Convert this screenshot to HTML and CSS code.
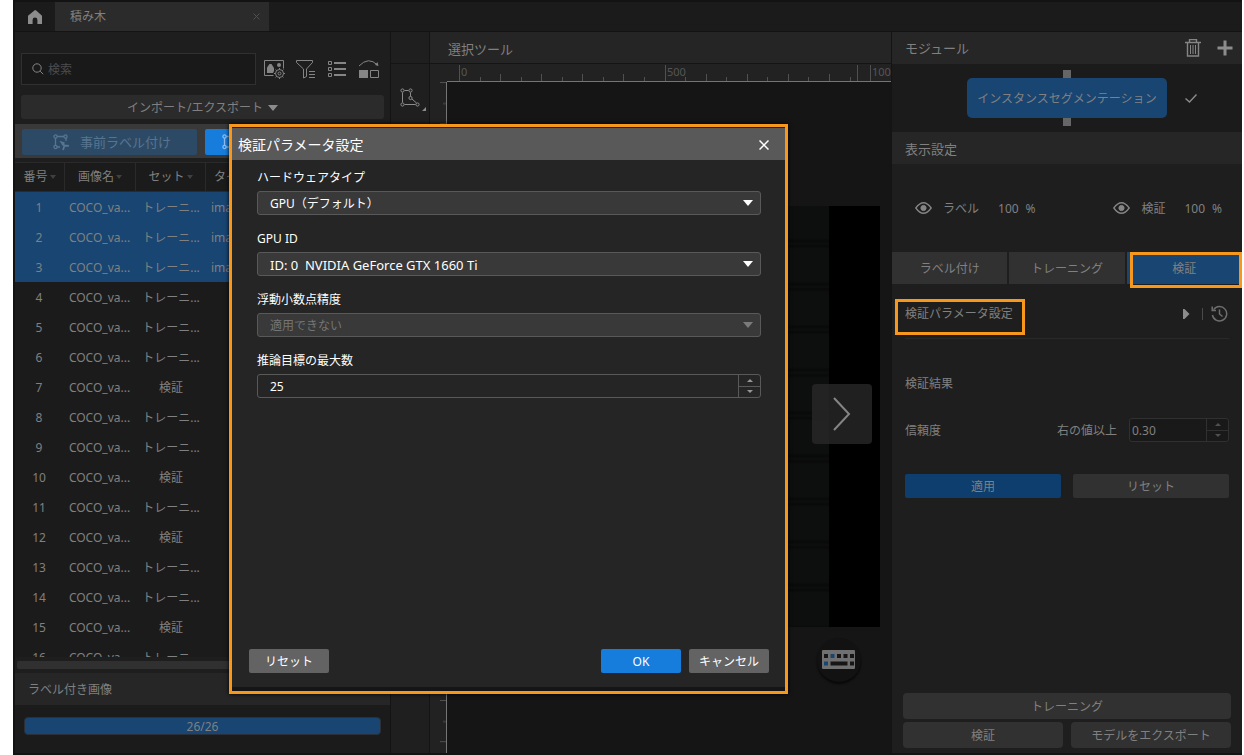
FILE: index.html
```html
<!DOCTYPE html>
<html lang="ja">
<head>
<meta charset="utf-8">
<title>検証パラメータ設定</title>
<link rel="stylesheet" href="styles.css">
</head>
<body>
<div class="app">
  <header class="titlebar">
    <button class="home" aria-label="ホーム">
      <svg width="16" height="16" viewBox="0 0 16 16"><path fill="#8c8c8c" d="M8 1L1 6.800V15h4.600v-4a2.400 2.400 0 0 1 4.800 0v4H15V6.800L9.200 1.600Q8 .6 6.800 1.600z"/></svg>
    </button>
    <div class="doc-tab"><span>積み木</span>
      <button class="tab-close" aria-label="閉じる"><svg width="7" height="7" viewBox="0 0 7 7"><path d="M.5 .5l6 6M6.500 .5l-6 6" stroke="#505050"/></svg></button>
    </div>
  </header>

  <div class="workspace">
    <section class="data-panel">
      <div class="search-row">
        <label class="search">
          <svg width="12" height="12" viewBox="0 0 12 12" fill="none" stroke="#858585"><circle cx="5" cy="5" r="4.200"/><path d="M8.200 8.200l3 3"/></svg>
          <input type="text" placeholder="検索" aria-label="検索">
        </label>
        <button class="icon-btn" aria-label="画像設定">
          <svg width="21" height="20" viewBox="0 0 21 20" fill="none" stroke="#858585"><path d="M9.500 16.500h-9v-15h19v8"/><path fill="#858585" stroke="none" d="M3 14V8.500L5.500 5h2L10 9v3l-1 2z"/><circle cx="15" cy="6" r="2" fill="#858585" stroke="none"/><circle cx="15.500" cy="14.500" r="4"/><circle cx="15.500" cy="14.500" r="1.500"/><path d="M15.500 9v1.500M15.500 18.500V20M10 14.500h1.500M19.500 14.500H21M11.600 10.600l1 1M18.400 17.400l1 1M11.600 18.400l1-1M18.400 11.600l1-1"/></svg>
        </button>
        <button class="icon-btn" aria-label="フィルター">
          <svg width="20" height="20" viewBox="0 0 20 20" fill="none" stroke="#858585"><path d="M.5 1.500h16v2L10.500 10v7.500l-3 1.500v-9L.5 3.500z"/><path d="M13 12.500h6M13 15.500h6M13 18.500h6"/></svg>
        </button>
        <button class="icon-btn" aria-label="リスト表示">
          <svg width="20" height="20" viewBox="0 0 20 20" fill="none" stroke="#858585"><path d="M1.500 2.500h3v3h-3zM1.500 8.500h3v3h-3zM1.500 14.500h3v3h-3z"/><path stroke-width="2" d="M7 4h12M7 10h12M7 16h12"/></svg>
        </button>
        <button class="icon-btn" aria-label="切り替え">
          <svg width="22" height="20" viewBox="0 0 22 20" fill="none" stroke="#858585"><path d="M1 7Q10.500-3 19.500 6"/><path fill="#858585" stroke="none" d="M1 11h9v8H1zM20.500 7l-1-4-2.500 3z"/><path d="M12.500 11.500h8v7h-8z"/></svg>
        </button>
      </div>
      <button class="io-btn">インポート/エクスポート
        <svg width="10" height="6" viewBox="0 0 10 6"><path fill="#8c8c8c" d="M0 0h10L5 6z"/></svg>
      </button>
      <div class="label-strip">
        <button class="label-btn pre">
          <svg width="17" height="17" viewBox="0 0 17 17" fill="none" stroke="#58758f" stroke-width="1.300"><path d="M4 2.500h7M2.500 4v7M13 4v3M4 13h3"/><circle cx="2.500" cy="2.500" r="1.600"/><circle cx="12.500" cy="2.500" r="1.600"/><circle cx="2.500" cy="13" r="1.600"/><path fill="#58758f" d="M8 8l3 .8-1 2z"/><path stroke-width="1.800" d="M9 9.500l2.500 2 4.500.3M11.500 11.500L10 16"/></svg>
          <span>事前ラベル付け</span>
        </button>
        <button class="label-btn main" aria-label="ラベル付け">
          <svg width="17" height="17" viewBox="0 0 17 17" fill="none" stroke="#8dbcec" stroke-width="1.300"><path d="M4 2.500h7M2.500 4v7M13 4v7M4 13h7"/><circle cx="2.500" cy="2.500" r="1.600"/><circle cx="12.500" cy="2.500" r="1.600"/><circle cx="2.500" cy="13" r="1.600"/><circle cx="12.500" cy="13" r="1.600"/></svg>
        </button>
      </div>
      <div class="table-wrap">
        <table class="images">
          <colgroup><col class="c-num"><col class="c-name"><col class="c-set"><col></colgroup>
          <thead><tr><th>番号<i class="sort"></i></th><th>画像名<i class="sort"></i></th><th>セット<i class="sort"></i></th><th>タイプ</th></tr></thead>
          <tbody>
            <tr class="sel"><td>1</td><td>COCO_va...</td><td>トレーニ...</td><td>image</td></tr>
            <tr class="sel"><td>2</td><td>COCO_va...</td><td>トレーニ...</td><td>image</td></tr>
            <tr class="sel"><td>3</td><td>COCO_va...</td><td>トレーニ...</td><td>image</td></tr>
            <tr><td>4</td><td>COCO_va...</td><td>トレーニ...</td><td></td></tr>
            <tr><td>5</td><td>COCO_va...</td><td>トレーニ...</td><td></td></tr>
            <tr><td>6</td><td>COCO_va...</td><td>トレーニ...</td><td></td></tr>
            <tr><td>7</td><td>COCO_va...</td><td>検証</td><td></td></tr>
            <tr><td>8</td><td>COCO_va...</td><td>トレーニ...</td><td></td></tr>
            <tr><td>9</td><td>COCO_va...</td><td>トレーニ...</td><td></td></tr>
            <tr><td>10</td><td>COCO_va...</td><td>検証</td><td></td></tr>
            <tr><td>11</td><td>COCO_va...</td><td>トレーニ...</td><td></td></tr>
            <tr><td>12</td><td>COCO_va...</td><td>検証</td><td></td></tr>
            <tr><td>13</td><td>COCO_va...</td><td>トレーニ...</td><td></td></tr>
            <tr><td>14</td><td>COCO_va...</td><td>トレーニ...</td><td></td></tr>
            <tr><td>15</td><td>COCO_va...</td><td>検証</td><td></td></tr>
            <tr><td>16</td><td>COCO_va...</td><td>トレーニ...</td><td></td></tr>
          </tbody>
        </table>
      </div>
      <div class="hscroll"></div>
      <h2 class="labelled-head">ラベル付き画像</h2>
      <div class="labelled-body">
        <div class="progress" role="progressbar" aria-valuenow="26" aria-valuemax="26">26/26</div>
      </div>
    </section>

    <nav class="tools">
      <div class="tools-top"></div>
      <button class="tool" aria-label="多角形ツール">
        <svg width="28" height="24" viewBox="0 0 28 24" fill="none" stroke="#8c8c8c"><path d="M4.500 2.500h4M2.500 4.500v10M4.500 16.500h11M10.500 4.500v4M12 11l4.500 4"/><circle cx="2.500" cy="2.500" r="1.600"/><circle cx="10.500" cy="2.500" r="1.600"/><circle cx="10.500" cy="10" r="1.600"/><circle cx="2.500" cy="16.500" r="1.600"/><circle cx="17.500" cy="16.500" r="1.600"/><path fill="#8c8c8c" stroke="none" d="M26 19v4h-4z"/></svg>
      </button>
    </nav>

    <main class="viewer">
      <h2 class="viewer-head">選択ツール</h2>
      <div class="rulers">
        <svg class="ruler-top" height="18">
          <path stroke="#505050" d="M29.500 1v16M235.500 1v16M427.500 1v16M440.500 1v16M70.500 10v7M111.500 10v7M152.500 10v7M193.500 10v7M276.500 10v7M317.500 10v7M358.500 10v7M399.500 10v7M50.500 13v4M91.500 13v4M132.500 13v4M173.500 13v4M214.500 13v4M255.500 13v4M296.500 13v4M337.500 13v4M378.500 13v4M420.500 13v4"/>
          <text x="31" y="12">0</text><text x="237" y="12">500</text><text x="442" y="12">1000</text>
          <path stroke="#757575" d="M17 17.500h2000"/>
        </svg>
        <div class="ruler-row">
          <svg class="ruler-left" width="17" height="100%">
            <defs><pattern id="vt" width="17" height="41.200" patternUnits="userSpaceOnUse"><path stroke="#505050" d="M10 .5h7M13 21.500h4"/></pattern></defs>
            <rect width="17" height="100%" fill="url(#vt)"/>
            <path stroke="#757575" d="M16.500 0v2000"/>
          </svg>
          <div class="canvas">
            <div class="picture"></div>
            <button class="next" aria-label="次へ"><svg width="20" height="34" viewBox="0 0 20 34" fill="none" stroke="#858585" stroke-width="2"><path d="M2 1l15 16L2 33"/></svg></button>
            <button class="keys" aria-label="ショートカット">
              <svg width="34" height="20" viewBox="0 0 34 20"><rect width="33" height="19" rx="1" fill="#707070"/><path fill="#161616" d="M15 4h4v4h-4zM21.500 4h4v4h-4zM28 4h4v4h-4zM2 4h4v4H2zM8.500 11.500h17v4h-17zM28 11.500h4v4h-4z"/><path fill="#184572" d="M8.500 4h4v4h-4zM2 11.500h4v4H2z"/></svg>
            </button>
          </div>
        </div>
      </div>
    </main>

    <aside class="side">
      <div class="side-head"><h2>モジュール</h2>
        <button class="icon-btn" aria-label="削除"><svg width="18" height="18" viewBox="0 0 18 18" fill="none" stroke="#858585"><path d="M1 3.500h16M5.500 3V.5h7V3M3.500 4v13h11V4" stroke-width="1.400"/><path d="M6.500 6v9M9 6v9M11.500 6v9"/></svg></button>
        <button class="icon-btn" aria-label="追加"><svg width="16" height="16" viewBox="0 0 16 16"><path d="M8 .5v15M.5 8h15" stroke="#8c8c8c" stroke-width="3"/></svg></button>
      </div>
      <div class="module-area">
        <div class="module">インスタンスセグメンテーション</div>
        <svg class="check" width="12" height="9" viewBox="0 0 12 9"><path d="M.5 4.500l4 3.500L11.500 .5" fill="none" stroke="#8c8c8c" stroke-width="1.400"/></svg>
      </div>
      <div class="side-head display-head"><h2>表示設定</h2></div>
      <div class="visibility">
        <div class="vis">
          <svg width="17" height="12" viewBox="0 0 17 12" fill="none" stroke="#858585"><path stroke-width="1.300" d="M.8 6Q8.500-4.500 16.200 6 8.500 16.500.8 6z"/><circle cx="8.500" cy="6" r="2.600" fill="#858585"/></svg>
          <span class="vis-name">ラベル</span><span class="vis-num">100</span><span>%</span>
        </div>
        <div class="vis second">
          <svg width="17" height="12" viewBox="0 0 17 12" fill="none" stroke="#858585"><path stroke-width="1.300" d="M.8 6Q8.500-4.500 16.200 6 8.500 16.500.8 6z"/><circle cx="8.500" cy="6" r="2.600" fill="#858585"/></svg>
          <span class="vis-name">検証</span><span class="vis-num">100</span><span>%</span>
        </div>
      </div>
      <div class="tabs">
        <button>ラベル付け</button><button>トレーニング</button><button class="on">検証</button>
      </div>
      <div class="side-body">
        <div class="param-row">
          <span class="marked">検証パラメータ設定</span>
          <button class="icon-btn" aria-label="開く"><svg width="7" height="10" viewBox="0 0 7 10"><path fill="#8c8c8c" d="M0 0h1.500L6.500 5 1.500 10H0z"/></svg></button>
          <i class="bar"></i>
          <button class="icon-btn" aria-label="履歴"><svg width="17" height="17" viewBox="0 0 17 17" fill="none" stroke="#6e6e6e" stroke-width="1.500"><path d="M2.600 4.600A7.200 7.200 0 1 1 1.400 10"/><path d="M1.200 1.500V5.500H5M8.500 4.500v4.500l3 2.500"/></svg></button>
        </div>
        <div class="result">検証結果</div>
        <div class="conf">
          <span>信頼度</span>
          <label for="conf">右の値以上</label>
          <div class="spin small">
            <input id="conf" type="number" step="0.01" value="0.30">
            <div class="steps"><button aria-label="増やす"><i class="up"></i></button><button aria-label="減らす"><i class="down"></i></button></div>
          </div>
        </div>
        <div class="apply-row"><button class="apply">適用</button><button>リセット</button></div>
      </div>
      <div class="side-foot">
        <button class="wide">トレーニング</button><button>検証</button><button>モデルをエクスポート</button>
      </div>
    </aside>
  </div>
</div>

<div class="dialog" role="dialog" aria-labelledby="dlg-title">
  <header class="dlg-head"><h1 id="dlg-title">検証パラメータ設定</h1>
    <button class="icon-btn" aria-label="閉じる"><svg width="10" height="10" viewBox="0 0 10 10"><path d="M.5 .5l9 9M9.500 .5l-9 9" stroke="#fff" stroke-width="1.500"/></svg></button>
  </header>
  <form class="dlg-form">
    <div class="field"><label for="hw">ハードウェアタイプ</label><div class="combo"><select id="hw"><option>GPU（デフォルト）</option></select></div></div>
    <div class="field"><label for="gpu">GPU ID</label><div class="combo"><select id="gpu" class="latin"><option>ID: 0&nbsp; NVIDIA GeForce GTX 1660 Ti</option></select></div></div>
    <div class="field"><label for="prec">浮動小数点精度</label><div class="combo off"><select id="prec" disabled><option>適用できない</option></select></div></div>
    <div class="field"><label for="max">推論目標の最大数</label>
      <div class="spin"><input id="max" type="number" value="25">
        <div class="steps"><button type="button" aria-label="増やす"><i class="up"></i></button><button type="button" aria-label="減らす"><i class="down"></i></button></div></div>
    </div>
  </form>
  <footer class="dlg-foot"><button>リセット</button><button class="ok">OK</button><button>キャンセル</button></footer>
</div>
</body>
</html>
```
FILE: styles.css
```css
* { box-sizing: border-box; }
body {
  margin: 0;
  background: #fff;
  color: #808080;
  font: 12px/18px "Noto Sans", "Noto Sans CJK JP", sans-serif;
}
button, input, select { font: inherit; color: inherit; }
button { border: 0; padding: 0; background: none; }
h1, h2 { margin: 0; font-weight: 400; }
h2 { font-size: 13px; }
svg { display: block; flex: none; }

.app {
  display: flex;
  flex-direction: column;
  height: 100vh;
  margin: 0 2px 0 13px;
  border-width: 2px 0 2px 2px;
  border-style: solid;
  border-color: #131313;
  background: #141414;
}

.titlebar { display: flex; flex: none; height: 29px; background: #1b1b1b; }
.home { width: 40px; display: flex; align-items: center; justify-content: center; }
.doc-tab {
  width: 214px;
  padding: 0 5px 0 15px;
  display: flex;
  align-items: center;
  justify-content: space-between;
  background: #2b2b2b;
}
.tab-close { padding: 4px 4px; }

.workspace { flex: 1; min-height: 0; display: flex; gap: 1px; padding-top: 1px; }

/* Left panel */
.data-panel { width: 375px; flex: none; display: flex; flex-direction: column; background: #1e1e1e; }
.search-row { display: flex; align-items: center; gap: 11px; padding: 21px 10px 10px 6px; }
.search {
  flex: 1;
  height: 32px;
  margin-right: -3px;
  padding-left: 10px;
  display: flex;
  align-items: center;
  gap: 4px;
  background: #191919;
  border: 1px solid #303030;
}
.search input { flex: 1; min-width: 0; border: 0; padding: 2px 0 0; background: none; outline: 0; }
.search input::placeholder { color: #4c4c4c; }
.icon-btn { flex: none; }
.io-btn {
  flex: none;
  height: 24px;
  margin: 0 6px;
  padding-top: 2px;
  display: flex;
  align-items: center;
  justify-content: center;
  gap: 5px;
  background: #2b2b2b;
  border-radius: 3px;
}
.label-strip { flex: none; display: grid; grid-template-columns: 1fr 1fr; gap: 8px; margin: 5px 0 4px; padding: 5px 10px 3px 7px; background: #393939; }
.label-btn { height: 26px; display: flex; align-items: center; gap: 10px; border-radius: 2px; font-size: 13px; }
.label-btn.pre { background: #2c4a66; color: #58758f; padding-left: 31px; }
.label-btn.main { background: #177ddc; padding-left: 17px; }
.table-wrap { flex: 1; min-height: 0; overflow: hidden; background: #1b1b1b; margin-bottom: 4px; }
.images { width: 100%; table-layout: fixed; border-collapse: separate; border-spacing: 0; }
.c-num { width: 50px; }
.c-name { width: 71px; }
.c-set { width: 70px; }
.images th { height: 30px; padding: 0; font-weight: 400; border: 1px solid #2a2a2a; border-width: 1px 1px 1px 0; }
.images td { height: 30px; padding: 2px 0 0; text-align: center; white-space: nowrap; overflow: hidden; }
.images td:first-child, .images td:nth-child(2) { padding-right: 2px; }
.images th:last-child { text-align: left; padding-left: 8px; }
.images td:last-child { text-align: left; padding-left: 5px; }
.sel { background: #184572; }
.sort { display: inline-block; margin-left: 2px; vertical-align: 2px; border: 3px solid transparent; border-top: 4px solid #404040; border-bottom: 0; }
.hscroll { flex: none; height: 8px; margin: 0 10px 4px 2px; border-radius: 2px; background: #303030; }
.labelled-head { flex: none; padding: 8px 14px 6px 13px; font-size: 12px; background: #262626; }
.labelled-body { flex: none; padding: 12px 9px 18px; background: #1b1b1b; }
.progress { height: 18px; line-height: 18px; text-align: center; border: 1px solid #2b3038; border-radius: 4px; background: #184572; }

/* Tool column */
.tools { width: 38px; flex: none; background: #1f1f1f; }
.tools-top { height: 32px; border-bottom: 1px solid #151515; }
.tool { padding: 24px 0 0 9px; }

/* Viewer */
.viewer { flex: 1; min-width: 0; display: flex; flex-direction: column; }
.viewer-head { flex: none; height: 31px; padding: 8px 18px; background: #252525; }
.rulers { flex: 1; min-height: 0; display: flex; flex-direction: column; margin-top: 1px; background: #222; }
.ruler-top { width: 100%; }
.ruler-top text { fill: #555; font-size: 11px; }
.ruler-row { flex: 1; min-height: 0; display: flex; }
.canvas { position: relative; flex: 1; min-width: 0; display: flex; align-items: center; justify-content: center; padding-bottom: 2px; background: #151515; }
.picture {
  width: 95%;
  aspect-ratio: 1;
  background:
    linear-gradient(90deg, transparent 88%, #000 88%),
    repeating-linear-gradient(#0d0f0e 0, #0d0f0e 32px, #080908 35px, #0d0f0e 38px, #080908 40px, #0d0f0e 43px);
}
.next {
  position: absolute;
  right: 19px;
  top: calc(50% - 34px);
  width: 60px;
  height: 60px;
  display: flex;
  align-items: center;
  justify-content: center;
  border-radius: 4px;
  background: rgb(40 40 40 / 80%);
}
.keys {
  position: absolute;
  right: 30px;
  bottom: 71px;
  width: 44px;
  height: 44px;
  display: flex;
  align-items: center;
  justify-content: center;
  border-radius: 50%;
  background: #121212;
  box-shadow: 0 2px 2px #080808;
}

/* Right panel */
.side { width: 350px; flex: none; display: flex; flex-direction: column; background: #1e1e1e; }
.side-head { flex: none; height: 32px; padding: 0 9px 0 13px; display: flex; align-items: center; gap: 15px; background: #262626; }
.display-head { padding-top: 2px; }
.side-head h2 { margin-right: auto; }
.module-area { flex: none; display: flex; align-items: center; padding: 14px 0 14px 75px; gap: 18px; background: #1b1b1b; }
.module {
  position: relative;
  width: 200px;
  height: 40px;
  padding-top: 1px;
  line-height: 40px;
  text-align: center;
  border-radius: 5px;
  background: #184572;
}
.module::before, .module::after { content: ""; position: absolute; left: 96px; width: 8px; height: 8px; background: #666; }
.module::before { top: -8px; }
.module::after { bottom: -8px; }
.visibility { flex: none; height: 88px; padding: 0 20px 0 23px; display: flex; align-items: center; justify-content: space-between; }
.vis { display: flex; align-items: center; gap: 7px; }
.vis span { padding-top: 2px; }
.vis-name { margin-left: 4px; }
.vis-num { margin-left: 12px; }
.tabs { flex: none; display: grid; grid-template-columns: 1fr 1fr 1fr; gap: 2px; }
.tabs button { position: relative; height: 32px; padding-top: 2px; background: #313131; }
.tabs .on { background: #184572; }
.tabs .on::after { content: ""; position: absolute; inset: 0 0 -4px 3px; border: 3px solid #f7981d; }
.side-body { flex: 1; padding: 0 13px; }
.param-row { display: flex; align-items: center; height: 55px; padding: 5px 1px 0 0; gap: 12px; border-bottom: 1px solid #292929; }
.param-row .bar { width: 1px; height: 12px; background: #4a4a4a; margin-right: -4px; }
.marked { position: relative; margin-right: auto; padding-top: 1px; }
.marked::after { content: ""; position: absolute; inset: -5px -12px -12px -10px; border: 3px solid #f7981d; }
.result { padding: 36px 0 25px; }
.conf { display: flex; align-items: center; gap: 12px; }
.conf span { margin-right: auto; }
.conf span, .conf label { padding-top: 2px; }
.apply-row { display: flex; gap: 12px; margin-top: 32px; }
.apply-row button { flex: 1; height: 24px; padding-top: 2px; border-radius: 2px; background: #313131; }
.apply-row .apply { background: #0d3e6e; }
.side-foot { display: grid; grid-template-columns: 1fr 1fr; gap: 3px 8px; padding: 0 11px 5px; }
.side-foot button { height: 26px; padding-top: 2px; border-radius: 4px; background: #313131; }
.side-foot .wide { grid-column: 1 / 3; }

.spin { display: flex; height: 24px; border: 1px solid #595959; border-radius: 3px; }
.spin input { flex: 1; min-width: 0; border: 0; padding: 2px 0 0 12px; background: none; outline: 0; appearance: textfield; }
.spin input::-webkit-inner-spin-button { display: none; }
.steps { width: 22px; display: flex; flex-direction: column; border-left: 1px solid #595959; }
.steps button { flex: 1; display: flex; align-items: center; justify-content: center; }
.steps button + button { border-top: 1px solid #595959; }
.up, .down { border: 3px solid transparent; }
.up { border-top: 0; border-bottom-color: #969696; }
.down { border-bottom: 0; border-top-color: #969696; }
.spin.small { width: 100px; background: #191919; }
.spin.small, .spin.small .steps, .spin.small .steps button { border-color: #303030; }
.spin.small input { padding-left: 2px; }
.spin.small .up { border-bottom-color: #505050; }
.spin.small .down { border-top-color: #505050; }

/* Dialog */
.dialog {
  position: absolute;
  left: 229px;
  top: 124px;
  width: 559px;
  height: 570px;
  display: flex;
  flex-direction: column;
  border: 3px solid #f7981d;
  background: #252525;
  color: #fff;
  box-shadow: 0 0 4px #000;
}
.dlg-head { flex: none; display: flex; align-items: center; justify-content: space-between; height: 33px; padding: 2px 16px 0 6px; border-top: 1px solid #222; background: #595959; }
.dlg-head h1 { font-size: 14px; }
.dlg-form { flex: 1; display: flex; flex-direction: column; gap: 15px; padding: 9px 24px 0 25px; }
.field { display: flex; flex-direction: column; gap: 4px; }
.combo { position: relative; }
.combo select { display: block; width: 100%; height: 24px; padding: 1px 12px 0; border: 1px solid #595959; border-radius: 3px; appearance: none; background: #393939; opacity: 1; }
.combo .latin { font-size: 13px; }
.combo::after { content: ""; position: absolute; right: 8px; top: 9px; border: 5px solid transparent; border-top: 6px solid #fff; border-bottom: 0; }
.combo.off select { color: #757575; }
.combo.off::after { border-top-color: #7b7b7b; }
.dlg-foot { display: flex; gap: 8px; padding: 0 16px 14px 17px; border-bottom: 4px solid #151515; }
.dlg-foot button { width: 80px; height: 24px; padding-top: 2px; border-radius: 2px; background: #636363; }
.dlg-foot button:first-child { margin-right: auto; }
.dlg-foot .ok { background: #177ddc; }
```
